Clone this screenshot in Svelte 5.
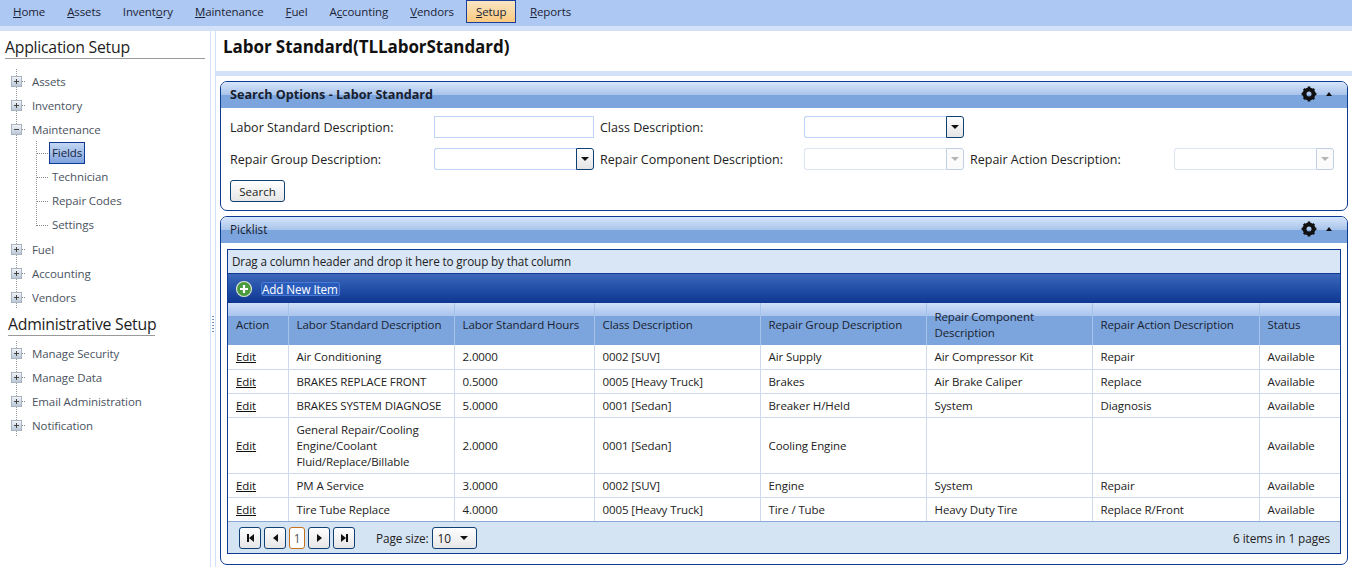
<script lang="ts">
  const menu = [
    { pre: '', key: 'H', post: 'ome' },
    { pre: '', key: 'A', post: 'ssets' },
    { pre: 'Invent', key: 'o', post: 'ry' },
    { pre: '', key: 'M', post: 'aintenance' },
    { pre: '', key: 'F', post: 'uel' },
    { pre: 'A', key: 'c', post: 'counting' },
    { pre: '', key: 'V', post: 'endors' },
    { pre: '', key: 'S', post: 'etup', active: true },
    { pre: '', key: 'R', post: 'eports' }
  ];

  const columns = [
    'Action',
    'Labor Standard Description',
    'Labor Standard Hours',
    'Class Description',
    'Repair Group Description',
    'Repair Component Description',
    'Repair Action Description',
    'Status'
  ];

  const rows = [
    ['Air Conditioning', '2.0000', '0002 [SUV]', 'Air Supply', 'Air Compressor Kit', 'Repair'],
    ['BRAKES REPLACE FRONT', '0.5000', '0005 [Heavy Truck]', 'Brakes', 'Air Brake Caliper', 'Replace'],
    ['BRAKES SYSTEM DIAGNOSE', '5.0000', '0001 [Sedan]', 'Breaker H/Held', 'System', 'Diagnosis'],
    ['General Repair/Cooling Engine/Coolant Fluid/Replace/Billable', '2.0000', '0001 [Sedan]', 'Cooling Engine', '', ''],
    ['PM A Service', '3.0000', '0002 [SUV]', 'Engine', 'System', 'Repair'],
    ['Tire Tube Replace', '4.0000', '0005 [Heavy Truck]', 'Tire / Tube', 'Heavy Duty Tire', 'Replace R/Front']
  ];

  const setupNodes = ['Assets', 'Inventory'];
  const afterNodes = ['Fuel', 'Accounting', 'Vendors'];
  const adminNodes = ['Manage Security', 'Manage Data', 'Email Administration', 'Notification'];
  const children = ['Fields', 'Technician', 'Repair Codes', 'Settings'];
</script>

{#snippet expander(open: boolean)}
  <svg class="exp" width="16" height="16" viewBox="0 0 16 16">
    <defs>
      <linearGradient id="expfill" x1="0" y1="0" x2="0" y2="1">
        <stop offset="0" stop-color="#f4f6f9" />
        <stop offset="1" stop-color="#b9c6d6" />
      </linearGradient>
    </defs>
    <rect x="0.5" y="3.5" width="10" height="10" fill="url(#expfill)" stroke="#a9b4c2" />
    <path d="M3 8.5h5" stroke="#444" />
    {#if !open}<path d="M5.5 6v5" stroke="#444" />{/if}
    <path d="M11 8.5h4" stroke="#8a8a8a" stroke-dasharray="1 1" />
  </svg>
{/snippet}

{#snippet gear()}
  <svg width="16" height="16" viewBox="0 0 16 16">
    <circle cx="8" cy="8" r="4.5" fill="none" stroke="#111" stroke-width="4" />
    <path d="M8 0.6v2.6M8 12.8v2.6M0.6 8h2.6M12.8 8h2.6M2.8 2.8l1.8 1.8M11.4 11.4l1.8 1.8M13.2 2.8l-1.8 1.8M4.6 11.4l-1.8 1.8" stroke="#111" stroke-width="2.6" />
  </svg>
{/snippet}

{#snippet combo(disabled: boolean)}
  <div class="combo" class:disabled>
    <span class="combo-field"></span>
    <span class="combo-btn"><i class="arrow-down"></i></span>
  </div>
{/snippet}

{#snippet node(label: string)}
  <li class="node">
    {@render expander(false)}
    <span>{label}</span>
  </li>
{/snippet}

<div class="page">
  <nav class="menu">
    {#each menu as m}
      <span class="menu-item" class:active={m.active}>{m.pre}<u>{m.key}</u>{m.post}</span>
    {/each}
  </nav>

  <div class="body">
    <aside class="side">
      <h2 class="side-title">Application Setup</h2>
      <ul class="tree">
        {#each setupNodes as n}{@render node(n)}{/each}
        <li class="node">
          {@render expander(true)}
          <span>Maintenance</span>
        </li>
        <li>
          <ul class="sub">
            {#each children as c, i}
              <li class="sub-node">
                <span class="dots"></span>
                <span class="sub-label" class:selected={i === 0}>{c}</span>
              </li>
            {/each}
          </ul>
        </li>
        {#each afterNodes as n}{@render node(n)}{/each}
      </ul>
      <h2 class="side-title admin">Administrative Setup</h2>
      <ul class="tree admin-tree">
        {#each adminNodes as n}{@render node(n)}{/each}
      </ul>
    </aside>

    <div class="splitter"><span class="grip"></span></div>

    <main class="content">
      <div class="title-bar"><h1>Labor Standard(TLLaborStandard)</h1></div>
      <div class="title-rule"></div>

      <section class="panel search">
        <header class="panel-head">
          <strong>Search Options - Labor Standard</strong>
          <span class="tools">{@render gear()}<i class="arrow-up"></i></span>
        </header>
        <div class="search-body">
          <div class="form-row">
            <label class="l1">Labor Standard Description:</label>
            <input class="text" />
            <label class="l2">Class Description:</label>
            <div class="c2">{@render combo(false)}</div>
          </div>
          <div class="form-row">
            <label class="l1">Repair Group Description:</label>
            <div class="c1">{@render combo(false)}</div>
            <label class="l2">Repair Component Description:</label>
            <div class="c2">{@render combo(true)}</div>
            <label class="l3">Repair Action Description:</label>
            <div class="c3">{@render combo(true)}</div>
          </div>
          <button class="search-btn">Search</button>
        </div>
      </section>

      <section class="panel picklist">
        <header class="panel-head">
          <span class="plain">Picklist</span>
          <span class="tools">{@render gear()}<i class="arrow-up"></i></span>
        </header>
        <div class="grid-wrap">
          <div class="grid">
            <div class="group-hint">Drag a column header and drop it here to group by that column</div>
            <div class="command">
              <svg width="18" height="18" viewBox="0 0 18 18">
                <circle cx="9" cy="9" r="7.5" fill="#4c9a3f" stroke="#d8e4d4" stroke-width="1.2" />
                <path d="M9 5v8M5 9h8" stroke="#fff" stroke-width="2.2" />
              </svg>
              <span class="add">Add New Item</span>
            </div>
            <table>
              <colgroup>
                <col style="width:60px" />
                <col style="width:166px" />
                <col style="width:140px" />
                <col style="width:166px" />
                <col style="width:166px" />
                <col style="width:166px" />
                <col style="width:167px" />
                <col />
              </colgroup>
              <thead>
                <tr>
                  {#each columns as c}<th>{c}</th>{/each}
                </tr>
              </thead>
              <tbody>
                {#each rows as r}
                  <tr>
                    <td><a href="#edit">Edit</a></td>
                    {#each r as v}<td>{v}</td>{/each}
                    <td>Available</td>
                  </tr>
                {/each}
              </tbody>
            </table>
            <div class="pager">
              <button class="pg" aria-label="First"><i class="bar"></i><i class="tri-l"></i></button>
              <button class="pg" aria-label="Previous"><i class="tri-l"></i></button>
              <span class="pg-num">1</span>
              <button class="pg" aria-label="Next"><i class="tri-r"></i></button>
              <button class="pg" aria-label="Last"><i class="tri-r"></i><i class="bar"></i></button>
              <span class="size-label">Page size:</span>
              <span class="size"><span>10</span><i class="arrow-down"></i></span>
              <span class="pager-info">6 items in 1 pages</span>
            </div>
          </div>
        </div>
      </section>
    </main>
  </div>
</div>

<style>
  :global(body) {
    margin: 0;
    background: #fff;
    font-family: "Open Sans", "Noto Sans", sans-serif;
    font-size: 11.5px;
    letter-spacing: -0.1px;
    color: #222;
    overflow: hidden;
  }

  .page {
    width: 1352px;
    height: 567px;
    display: flex;
    flex-direction: column;
    overflow: hidden;
  }

  .menu {
    height: 26px;
    box-sizing: border-box;
    background: #adc8f3;
    display: flex;
    align-items: flex-start;
    padding-left: 5.5px;
    color: #1c2433;
  }

  .menu-item {
    padding: 0 7.5px;
    height: 23px;
    line-height: 24px;
    margin-right: 7px;
    box-sizing: border-box;
  }

  .menu-item.active {
    background: linear-gradient(#f9e6c4, #fbc97e);
    border: 1px solid #1a3f9a;
    line-height: 22px;
    padding: 0 9px;
    margin-left: -2.5px;
    margin-right: 6px;
  }

  .body {
    flex: 1;
    display: flex;
    min-height: 0;
    border-top: 5px solid #d3e2f8;
  }

  .side {
    width: 210px;
    flex: none;
    padding: 6px 0 0 5px;
    box-sizing: border-box;
  }

  .side-title {
    font-size: 15.8px;
    font-weight: 400;
    margin: 0;
    width: 200px;
    height: 22px;
    line-height: 21px;
    border-bottom: 1px solid #9a9a9a;
    box-sizing: border-box;
    color: #1d1d1d;
    letter-spacing: -0.25px;
    white-space: nowrap;
  }

  .side-title.admin {
    margin: 5px 0 0 3px;
    width: 147px;
  }

  ul {
    list-style: none;
    margin: 0;
    padding: 0;
  }

  .tree {
    margin-top: 10px;
    padding-left: 6px;
    background-image: linear-gradient(#999 50%, transparent 50%);
    background-size: 1px 2px;
    background-repeat: repeat-y;
    background-position: 11px 0;
    color: #4a5360;
  }

  .admin-tree {
    margin-top: 5px;
  }

  .node {
    height: 24px;
    display: flex;
    align-items: center;
    gap: 5px;
  }

  .exp {
    flex: none;
  }

  .sub {
    margin-left: 25px;
    height: 96px;
    position: relative;
  }

  .sub::before {
    content: '';
    position: absolute;
    left: 0;
    top: 0;
    width: 1px;
    height: 84px;
    background-image: linear-gradient(#999 50%, transparent 50%);
    background-size: 1px 2px;
  }

  .sub-node {
    height: 24px;
    display: flex;
    align-items: center;
  }

  .dots {
    width: 12px;
    border-top: 1px dotted #888;
    flex: none;
  }

  .sub-label {
    padding: 0 2px;
    height: 22px;
    line-height: 20px;
    border: 1px solid transparent;
    box-sizing: border-box;
    margin-left: 1px;
  }

  .sub-label.selected {
    background: linear-gradient(#c4d7f3, #7fa3de);
    border-color: #0f3a94;
    color: #16233c;
  }

  .splitter {
    width: 6px;
    flex: none;
    box-sizing: border-box;
    background: #fff;
    border-left: 1px solid #d3e2f8;
    border-right: 1px solid #d3e2f8;
    display: flex;
    align-items: flex-start;
    justify-content: center;
  }

  .grip {
    width: 2px;
    height: 18px;
    margin-top: 285px;
    background-image: linear-gradient(#6c8fc7 50%, transparent 50%);
    background-size: 2px 3px;
  }

  .content {
    flex: 1;
    min-width: 0;
    display: flex;
    flex-direction: column;
  }

  .title-bar {
    height: 40px;
    box-sizing: border-box;
    padding: 4px 0 0 7px;
  }

  h1 {
    margin: 0;
    font-size: 17px;
    font-weight: 700;
    color: #111;
    line-height: 24px;
    letter-spacing: -0.07px;
  }

  .title-rule {
    height: 5px;
    background: #d3e2f8;
  }

  .panel {
    border: 1px solid #0f3a94;
    border-radius: 7px;
    margin: 5px 4px 0 4px;
    overflow: hidden;
    background: #fff;
  }

  .panel-head {
    height: 26px;
    box-sizing: border-box;
    display: flex;
    align-items: center;
    justify-content: space-between;
    padding: 0 15px 2px 9px;
    background: linear-gradient(#d6e6fb 0, #a8c3ea 13px, #7ca5dd 13px, #7ca5dd 100%);
    color: #17202e;
    font-size: 12.6px;
    letter-spacing: 0;
  }

  .panel-head .plain {
    font-size: 11.7px;
  }

  .tools {
    display: flex;
    align-items: center;
    gap: 9px;
  }

  .arrow-up {
    width: 0;
    height: 0;
    border-left: 3.5px solid transparent;
    border-right: 3.5px solid transparent;
    border-bottom: 4px solid #111;
  }

  .arrow-down {
    display: inline-block;
    width: 0;
    height: 0;
    border-left: 4px solid transparent;
    border-right: 4px solid transparent;
    border-top: 4px solid #111;
  }

  .search {
    height: 130px;
    box-sizing: border-box;
    flex: none;
  }

  .search-body {
    padding: 8px 9px 0;
  }

  .form-row {
    display: flex;
    align-items: center;
    height: 22px;
    margin-bottom: 10px;
    font-size: 12.5px;
    letter-spacing: 0;
  }

  .l1 { width: 204px; flex: none; }
  .l2 { width: 204px; flex: none; margin-left: 6px; }
  .l3 { width: 204px; flex: none; margin-left: 6px; }
  .c1, .c2, .c3 { width: 160px; flex: none; }

  .text {
    width: 160px;
    height: 22px;
    box-sizing: border-box;
    border: 1px solid #bcd4f6;
    flex: none;
    margin: 0;
    padding: 0;
  }

  .combo {
    display: flex;
    height: 22px;
    width: 160px;
    box-sizing: border-box;
  }

  .combo-field {
    flex: 1;
    border: 1px solid #bcd4f6;
    border-right: none;
    border-radius: 3px 0 0 3px;
  }

  .combo-btn {
    width: 18px;
    box-sizing: border-box;
    border: 1px solid #103f74;
    border-radius: 0 3px 3px 0;
    background: linear-gradient(#fff, #e4e4e4);
    display: flex;
    align-items: center;
    justify-content: center;
  }

  .combo.disabled .combo-field {
    border-color: #dde6f2;
  }

  .combo.disabled .combo-btn {
    border-color: #bfd0e4;
    background: #fbfbfb;
  }

  .combo.disabled .arrow-down {
    border-top-color: #b5b5b5;
  }

  .search-btn {
    display: block;
    width: 55px;
    height: 22px;
    padding: 0;
    border: 1px solid #103f74;
    border-radius: 3px;
    background: linear-gradient(#fff, #e6e6e6);
    font: inherit;
    color: #222;
  }

  .picklist {
    flex: 1;
    margin-bottom: 2px;
    min-height: 0;
  }

  .grid-wrap {
    padding: 6px 6px 0;
  }

  .grid {
    border: 1px solid #0f3a94;
    background: #fff;
    height: 305px;
    box-sizing: border-box;
    display: flex;
    flex-direction: column;
  }

  .group-hint {
    height: 23px;
    box-sizing: border-box;
    line-height: 23px;
    padding-left: 4px;
    background: #d9e6f5;
    font-size: 11.7px;
    letter-spacing: -0.13px;
  }

  .command {
    height: 30px;
    box-sizing: border-box;
    display: flex;
    align-items: center;
    gap: 8px;
    padding-left: 7px;
    background: linear-gradient(#3d68ba 0, #234fa8 50%, #0e3690 100%);
    color: #fff;
    border-top: 1px solid #0f3a94;
  }

  .add {
    background: #2a5cbc;
    border: 1px solid #4a7ad4;
    border-radius: 2px;
    padding: 0 1px 0 0;
    line-height: 12px;
    font-size: 11.7px;
  }

  table {
    width: 100%;
    border-collapse: collapse;
    table-layout: fixed;
  }

  th {
    height: 42px;
    box-sizing: border-box;
    font-weight: 400;
    text-align: left;
    padding: 2px 8px 0;
    line-height: 16px;
    color: #1a2230;
    background: linear-gradient(#cfdff7 0, #a9c4ee 13px, #7ca5dd 13px, #7ca5dd 100%);
    border-right: 1px solid #a8c3ea;
  }

  td {
    height: 24px;
    box-sizing: border-box;
    padding: 4px 8px 3px;
    line-height: 16px;
    border-right: 1px solid #ccd9ee;
    border-bottom: 1px solid #ccd9ee;
    color: #222;
  }

  tbody tr:last-child td {
    border-bottom: none;
  }

  th:last-child, td:last-child {
    border-right: none;
  }

  td a {
    color: #111;
    text-decoration: underline;
  }

  .pager {
    flex: 1;
    display: flex;
    align-items: center;
    background: #d5e4f3;
    border-top: 1px solid #8aa9d6;
    padding: 0 10px 0 11px;
    gap: 3px;
    font-size: 11.8px;
  }

  .pg {
    width: 22px;
    height: 22px;
    padding: 0;
    border: 1px solid #103f74;
    border-radius: 3px;
    background: linear-gradient(#fff, #e6e6e6);
    display: inline-flex;
    align-items: center;
    justify-content: center;
  }

  .pg-num {
    width: 16px;
    height: 22px;
    box-sizing: border-box;
    text-align: center;
    line-height: 20px;
    border: 1px solid #c4701c;
    border-radius: 3px;
    background: #fff;
    color: #555;
  }

  .tri-l, .tri-r, .bar {
    display: block;
  }

  .tri-l {
    width: 0;
    border-top: 4px solid transparent;
    border-bottom: 4px solid transparent;
    border-right: 5px solid #111;
  }

  .tri-r {
    width: 0;
    border-top: 4px solid transparent;
    border-bottom: 4px solid transparent;
    border-left: 5px solid #111;
  }

  .bar {
    width: 2px;
    height: 8px;
    background: #111;
  }

  .size-label {
    margin-left: 18px;
  }

  .size {
    width: 45px;
    height: 22px;
    box-sizing: border-box;
    border: 1px solid #103f74;
    border-radius: 3px;
    background: linear-gradient(#fff, #e6e6e6);
    display: flex;
    align-items: center;
    justify-content: space-between;
    padding: 0 8px 0 5px;
  }

  .pager-info {
    margin-left: auto;
  }
</style>
